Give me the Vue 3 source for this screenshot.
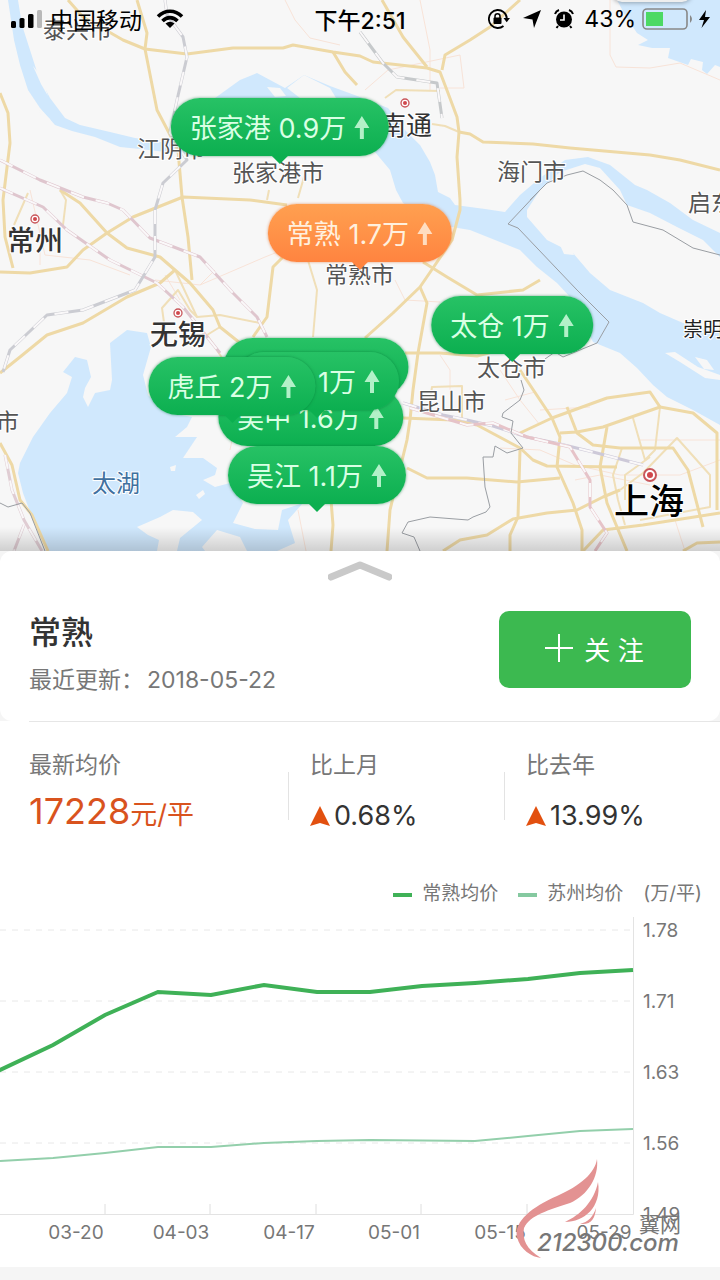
<template>
  <main class="page">
    <section class="map">
      <!-- 地图底图 -->
      <svg class="map-base" viewBox="0 0 720 551" xmlns="http://www.w3.org/2000/svg">
        <rect width="720" height="551" fill="#f7f7f7"/>
        <g class="water">
          <path v-for="(d, index) in waters" :key="index" :d="d"/>
        </g>
        <g class="land">
          <path v-for="(d, index) in islands" :key="index" :d="d"/>
        </g>
        <path class="road-minor" v-for="(d, index) in minorRoads" :key="'m' + index" :d="d"/>
        <path class="road-side" v-for="(d, index) in sideRoads" :key="'s' + index" :d="d"/>
        <path class="road" v-for="(d, index) in roads" :key="'r' + index" :d="d"/>
        <g v-for="(rail, index) in rails" :key="'t' + index">
          <path class="rail" :d="rail.d" :stroke="rail.color"/>
          <path class="rail-gap" :d="rail.d"/>
        </g>
        <path class="border" v-for="(d, index) in borders" :key="'b' + index" :d="d"/>
        <g v-for="city in cities" :key="city.x">
          <circle :cx="city.x" :cy="city.y" :r="city.r" fill="#fff" stroke="#c9575c" :stroke-width="city.r / 3"/>
          <circle :cx="city.x" :cy="city.y" :r="city.r / 2" fill="#d0474c"/>
        </g>
        <text
          v-for="place in places"
          :key="place.name + place.x"
          class="place"
          :class="place.kind"
          :x="place.x"
          :y="place.y"
        >{{ place.name }}</text>
        <rect class="top-card" x="612" y="-30" width="80" height="32" rx="10"/>
      </svg>

      <!-- 均价标注 -->
      <button
        v-for="pin in pins"
        :key="pin.x + '-' + pin.y"
        class="pin"
        :class="{ active: pin.active }"
        :style="{ left: pin.x / 7.2 + '%', top: pin.y / 5.51 + '%', minWidth: pin.width + 'px' }"
      >
        <span>{{ pin.name }} {{ pin.price }}</span>
        <svg width="16" height="24" viewBox="0 0 16 24">
          <path d="M8 1L15.5 13H10V24H6V13H.5Z" fill="currentColor"/>
        </svg>
      </button>

      <!-- 状态栏 -->
      <header class="status-bar">
        <div class="status-left">
          <svg width="32" height="20" viewBox="0 0 32 20">
            <rect x="1" y="12" width="5" height="7" rx="1.5"/>
            <rect x="9.5" y="9" width="5" height="10" rx="1.5"/>
            <rect x="18" y="5" width="5.500" height="14" rx="1.5"/>
            <rect x="27" y="1" width="5" height="18" rx="1.5" fill="#b9b9b9"/>
          </svg>
          <span>中国移动</span>
          <svg class="wifi" width="28" height="20" viewBox="0 0 28 20" fill="none" stroke="#000" stroke-width="3.6">
            <path d="M2 7.5C9 .5 19 .5 26 7.5"/>
            <path d="M6.5 12C11 7.5 17 7.5 21.5 12"/>
            <path d="M14 19L9.5 14.5Q14 11 18.5 14.5Z" fill="#000" stroke="none"/>
          </svg>
        </div>
        <strong>下午2:51</strong>
        <div class="status-right">
          <svg width="22" height="20" viewBox="0 0 22 20">
            <path d="M15.5 3A9 9 0 1 0 15.500 17M15.500 3Q18.800 5.500 18.800 9.500" fill="none" stroke="#000" stroke-width="1.8"/>
            <path d="M15.5 9H22L18.7 13.2Z"/>
            <rect x="5.5" y="8.5" width="8" height="6.500" rx="1"/>
            <path d="M7 9V7.2A2.5 2.5 0 0 1 12 7.2V9" fill="none" stroke="#000" stroke-width="1.5"/>
          </svg>
          <svg width="20" height="20" viewBox="0 0 20 20">
            <path d="M19 1L12 19L10.5 10.5L1 9Z"/>
          </svg>
          <svg width="20" height="20" viewBox="0 0 20 20">
            <circle cx="10" cy="10.5" r="8"/>
            <path d="M1 5Q2 2 5 1M19 5Q18 2 15 1M4 17L2.5 19M16 17L17.5 19" fill="none" stroke="#000" stroke-width="2"/>
            <path d="M10 5.5V11H6" fill="none" stroke="#fff" stroke-width="1.6"/>
          </svg>
          <span>43%</span>
          <svg width="68" height="22" viewBox="0 0 68 22">
            <rect x="1" y="1" width="44" height="20" rx="4" fill="none" stroke="#888" stroke-width="1.6"/>
            <rect x="4" y="4" width="17" height="14" fill="#4cd964"/>
            <path d="M48 7Q52 11 48 15Z" fill="#888"/>
            <path d="M64 2L57 12H62L59.5 20L68 9H63Z"/>
          </svg>
        </div>
      </header>
    </section>

    <!-- 城市信息 -->
    <section class="city">
      <button class="handle" aria-label="展开">
        <svg width="64" height="20" viewBox="0 0 64 20">
          <path d="M3 16L32 4L61 16" fill="none" stroke="#c9c9c9" stroke-width="7" stroke-linecap="round" stroke-linejoin="round"/>
        </svg>
      </button>
      <div class="city-row">
        <div>
          <h1>常熟</h1>
          <p><span>最近更新：</span><span>2018-05-22</span></p>
        </div>
        <button class="follow">
          <svg width="30" height="30" viewBox="0 0 30 30">
            <path d="M15 1V29M1 15H29" stroke="#fff" stroke-width="2"/>
          </svg>
          <span>关 注</span>
        </button>
      </div>
    </section>

    <!-- 价格数据 -->
    <section class="stats">
      <div class="stat">
        <h2>最新均价</h2>
        <p class="price">17228<small>元/平</small></p>
      </div>
      <div class="stat" v-for="item in changes" :key="item.label">
        <h2>{{ item.label }}</h2>
        <p>
          <svg width="20" height="20" viewBox="0 0 20 20">
            <path d="M10 0L20 20L10 17L0 20Z" fill="#e2500f"/>
          </svg>
          {{ item.value }}
        </p>
      </div>
    </section>

    <!-- 走势图 -->
    <section class="trend">
      <div class="legend">
        <span class="legend-item">常熟均价</span>
        <span class="legend-item light">苏州均价</span>
        <span class="unit">(万/平)</span>
      </div>
      <svg class="chart" viewBox="0 914 720 354" xmlns="http://www.w3.org/2000/svg">
        <path
          v-for="row in rows.slice(0, 4)"
          :key="row.y"
          :d="`M0 ${row.y}H633`"
          stroke="#e8e8e8"
          stroke-width="1"
          stroke-dasharray="6 6"
        />
        <path d="M0 1215.5H633.5V918" fill="none" stroke="#e3e3e3"/>
        <path v-for="x in ticks" :key="x" :d="`M${x} 1205V1215`" stroke="#dedede"/>
        <polyline :points="suzhou" fill="none" stroke="#93cfab" stroke-width="2"/>
        <polyline :points="changshu" fill="none" stroke="#3fb157" stroke-width="4"/>
        <text v-for="row in rows" :key="row.label" x="643" :y="row.y + 7">{{ row.label }}</text>
        <text v-for="day in days" :key="day.label" :x="day.x" y="1240" text-anchor="middle">{{ day.label }}</text>
        <!-- 水印 -->
        <g class="wing" fill="#e39292">
          <path d="M597 1160C595 1174 580 1187 557 1197C532 1208 514 1222 517 1238C520 1251 532 1258 541 1259C526 1250 522 1240 524 1229C530 1216 549 1211 570 1204C588 1196 599 1178 597 1160Z"/>
          <path d="M598 1183C594 1203 580 1216 565 1223C584 1223 602 1208 598 1183Z"/>
          <path d="M596 1209C593 1218 588 1223 580 1225C592 1226 595 1219 596 1209Z"/>
        </g>
        <text class="mark-name" x="639" y="1233">翼网</text>
        <text class="mark-site" x="537" y="1252">212300.com</text>
      </svg>
    </section>
  </main>
</template>

<script setup>
import { ref } from 'vue'

// 标注，x / y 为箭头尖端位置
const pins = ref([
  { name: '张家港', price: '0.9万', x: 280, y: 164 },
  { name: '常熟', price: '1.7万', x: 360, y: 270, active: true },
  { name: '太仓', price: '1万', x: 512, y: 362 },
  { name: '', price: '', x: 316, y: 404, width: 185 },
  { name: '吴中', price: '1.6万', x: 311, y: 454 },
  { name: '', price: '1万', x: 317, y: 418, width: 164 },
  { name: '虎丘', price: '2万', x: 232, y: 423 },
  { name: '吴江', price: '1.1万', x: 317, y: 512 }
])

const places = [
  { name: '泰兴市', x: 43, y: 38 },
  { name: '江阴市', x: 137, y: 157 },
  { name: '张家港市', x: 232, y: 181 },
  { name: '南通', x: 380, y: 135, kind: 'town' },
  { name: '海门市', x: 497, y: 180 },
  { name: '启东市', x: 688, y: 211 },
  { name: '常州', x: 7, y: 251, kind: 'big' },
  { name: '常熟市', x: 325, y: 283 },
  { name: '无锡', x: 150, y: 345, kind: 'big' },
  { name: '太仓市', x: 477, y: 376 },
  { name: '崇明', x: 683, y: 337, kind: 'dark' },
  { name: '昆山市', x: 417, y: 410 },
  { name: '市', x: -4, y: 430 },
  { name: '太湖', x: 92, y: 492, kind: 'lake' },
  { name: '上海', x: 614, y: 514, kind: 'metro' }
]

const cities = [
  { x: 405, y: 103, r: 4 },
  { x: 35, y: 219, r: 4 },
  { x: 178, y: 313, r: 4 },
  { x: 650, y: 475, r: 6 }
]

// 长江、太湖和近海
const waters = [
  'M8 0L14 40L20 65L28 90L40 108L55 125L72 131L95 137L120 147L140 149L200 156L375 152L390 170L396 190L403 203L440 225L470 230L500 242L520 250L537 267L557 283L570 297L593 342L620 353L637 368L653 385L667 397L693 410L720 425V333L683 323L660 313L643 303L610 290L590 273L573 253L547 240L527 217L527 210L540 190L560 172L585 164L600 168L620 190L627 205L650 213L677 227L703 240L720 257V233L693 220L670 203L647 190L635 185L610 165L588 157L565 160L540 178L520 195L505 212L485 209L455 205L450 198L438 192L435 175L430 162L420 145L405 130L388 108L360 97L330 86L304 75L285 88L257 73L240 80L215 98L180 140L160 142L135 138L110 132L80 125L65 118L50 98L38 75L30 50L22 25L18 0Z',
  'M617 0L625 15L637 33L648 40L638 45L652 48L670 48L668 58L688 65L691 59L703 62L702 70L707 74L715 65L720 67V0Z',
  'M75 357L87 360L91 377L85 388L83 397L88 407L95 393L110 390L112 380L110 343L127 330L147 333L151 347L143 375L148 395L165 412L192 417L187 427L175 437L197 437L183 458L203 458L217 468L215 475L203 480L215 487L230 483L243 503L233 523L255 529L278 530L282 510L303 503L288 520L295 543L277 551H247L240 537L217 530L202 547L205 551H177L180 538L202 520L193 512L173 510L160 517L137 527L148 535L159 540L157 551H48L43 540L32 517L23 493L18 473L20 463L33 437L50 413L67 393L72 377L63 372Z'
]

const islands = [
  'M287 88L304 75L330 88L336 98H300Z',
  'M267 87L280 88L286 96L275 97Z',
  'M665 353L675 352L698 367L720 375V380L705 378L680 362Z',
  'M695 357L707 360L714 370L704 369Z',
  'M560 245L570 244L574 255L564 254Z',
  'M170 467L176 465L175 471L171 471Z',
  'M196 495L203 490L205 494L199 499Z',
  'M33 66L42 77L48 96L41 84Z',
  'M38 108L50 119L52 125L41 115Z'
]

// 高速
const roads = [
  'M68 0L83 17L123 40L145 49L187 54L233 48L283 48L293 45L333 52L360 56L373 62L427 68L440 72L448 93L457 117L459 132L457 157L460 200L460 210L452 240L433 268L420 287L393 313L365 338',
  'M137 0L147 33L145 49L157 110L178 150L182 197L188 237L192 280',
  'M459 132L470 134L483 142L533 144L570 148L650 155L680 160L720 170',
  'M442 70L445 55L470 40L490 27L520 0',
  'M382 0L403 37L427 67',
  'M333 52L345 72L357 85',
  'M0 93L8 113L10 143L3 200L5 237L13 268',
  'M0 272L30 273L67 267L83 250L107 233L133 217L183 197L250 200L287 205',
  'M60 190L80 203L107 233L127 248L160 257L190 283L213 310L220 327L240 343',
  'M0 373L20 357L47 335L83 323L127 297L160 283L175 270',
  'M253 337L267 317L273 267L283 257',
  'M423 262L447 277L477 295L523 290L540 280',
  'M420 287L427 303L418 353L413 390L410 420L407 440L390 510L387 551',
  'M405 353H440L477 356L500 350',
  'M520 370L552 418L560 437L557 467L573 503L582 530V551',
  'M403 418L453 420L477 425L520 448L533 460L547 466L617 467',
  'M520 433L552 418L607 398L650 392L660 407',
  'M567 407L577 433L593 445L620 448L673 448L688 470L703 527',
  'M560 433L577 432L603 427L660 407L693 413L717 433V510',
  'M607 427L600 467L607 503L627 551',
  'M407 468L427 478L467 478L517 482L560 478',
  'M520 450L518 517L510 535V551',
  'M443 551L460 540L487 535L513 519L547 513L577 510L603 497L620 490',
  'M583 551L603 530L643 525L720 513',
  'M683 551L697 543L720 542',
  'M0 443L12 465L20 500L32 515L48 551',
  'M331 500L333 525L331 551'
]

const sideRoads = [
  'M385 98L396 90L440 91M432 124L445 126L459 132',
  'M63 225L66 200L60 190M28 193L14 225',
  'M175 270L197 317L220 315L260 323',
  'M307 257L317 290L313 337',
  'M220 327L207 335L230 370M165 330L162 308L178 290L190 310L197 317',
  'M620 490L643 473L677 438L710 475V507L640 520',
  'M633 418L645 460L655 450L660 407',
  'M622 448L613 475L618 500L625 525M625 500V475L650 457',
  'M267 200L269 190M298 198L306 170',
  'M430 400L432 387L462 386V418'
]

const minorRoads = [
  'M420 0L430 50V90M365 90L388 70L460 55L464 88H440',
  'M610 0V55L616 67L650 68L680 63L720 80',
  'M285 0L295 20L310 38L340 45',
  'M30 190L45 255L90 260L130 275',
  'M155 280L200 285L265 257L280 251M200 285L215 270',
  'M40 265V230M165 275L180 300',
  'M395 280L405 300L440 302',
  'M440 355L450 370V395M500 370L520 400L540 425M505 400L535 392',
  'M500 448L540 450L575 465L620 475H680L720 460',
  'M640 440H720M540 410L590 407',
  'M298 510L306 551M232 440L230 450',
  'M675 520L685 551M575 480L600 475L650 485'
]

const rails = [
  { color: '#dfc6ce', d: 'M0 160L40 180L83 197L107 203L123 210L150 238L200 257L233 293L257 317L267 337' },
  { color: '#dfc6ce', d: 'M0 188L43 207L67 230L110 260L157 283L183 307L220 353' },
  { color: '#cbccd2', d: 'M165 0L167 15L183 37L187 57L177 100L170 133L187 160L163 183L155 210L155 257L135 290L83 310L47 315L10 350L3 372' },
  { color: '#c6c9cb', d: 'M360 32L383 63L397 77L437 83L442 118' },
  { color: '#cdc9d8', d: 'M403 403L443 415L467 420L493 426L527 437L560 444L593 452L643 465' },
  { color: '#e6c3c8', d: 'M410 408L467 425L493 423L527 437L570 447L590 480V507L607 533L595 551' },
  { color: '#e0cdd3', d: 'M5 455L12 490L24 520L42 551M24 525L14 551' }
]

const borders = [
  'M530 200L547 183L567 175L583 171L600 180L613 190L627 205L633 222L663 230L693 248L720 255',
  'M540 190L508 224L518 228L577 290L609 322L597 343L580 350L563 357L555 352L545 359',
  'M521 380L524 390L520 400L503 413L502 417L513 421L511 433L519 443L523 448L507 453L495 446L493 457L483 457L485 487L490 507L486 512L473 517L468 520L430 517L408 522L402 533L414 537L420 551',
  'M0 503L8 507L22 503L30 513L45 551'
]

const changes = ref([
  { label: '比上月', value: '0.68%' },
  { label: '比去年', value: '13.99%' }
])

// 走势数据
const rows = [
  { y: 931, label: '1.78' },
  { y: 1002, label: '1.71' },
  { y: 1073, label: '1.63' },
  { y: 1144, label: '1.56' },
  { y: 1215, label: '1.49' }
]
const ticks = [105, 210, 316, 421, 527]
const days = [
  { x: 76, label: '03-20' },
  { x: 181, label: '04-03' },
  { x: 289, label: '04-17' },
  { x: 394, label: '05-01' },
  { x: 500, label: '05-15' },
  { x: 604, label: '05-29' }
]
const changshu = '-2,1072 53,1046 105,1016 158,993 211,996 264,986 317,993 370,993 422,987 475,984 528,980 580,974 633,971'
const suzhou = '0,1162 53,1159 105,1154 158,1148 211,1148 264,1144 317,1142 370,1141 475,1142 528,1137 580,1132 633,1130'
</script>

<style>
body {
  background: #f5f5f5;
}
</style>

<style scoped>
.page {
  font-family: Inter, "Noto Sans CJK SC", sans-serif;
  color: #333;
}

h1,
h2,
p {
  margin: 0;
  font-weight: 400;
}

button {
  border: none;
  padding: 0;
  background: none;
  font-family: inherit;
  cursor: pointer;
}

svg {
  display: block;
  flex: none;
}

/* 地图 */
.map {
  position: relative;
  overflow: hidden;
}

.map::after {
  content: "";
  position: absolute;
  left: 0;
  right: 0;
  bottom: 0;
  height: 24px;
  background: linear-gradient(rgba(0, 0, 0, 0), rgba(0, 0, 0, 0.16));
}

.map-base {
  width: 100%;
}

.water path {
  fill: #d0e8fd;
}

.land path {
  fill: #f7f7f7;
}

.top-card {
  fill: #eee;
  filter: drop-shadow(0 1px 2px rgba(0, 0, 0, 0.3));
}

.road,
.road-side,
.road-minor,
.rail,
.rail-gap,
.border {
  fill: none;
  stroke-linejoin: round;
}

.road {
  stroke: #eed9a6;
  stroke-width: 3px;
}

.road-side {
  stroke: #f0dfb8;
  stroke-width: 2px;
}

.road-minor {
  stroke: #f8e3d8;
  stroke-width: 1px;
}

.rail {
  stroke-width: 3px;
}

.rail-gap {
  stroke: #faf8f9;
  stroke-width: 2px;
  stroke-dasharray: 14 12;
}

.border {
  stroke: #9a9ea3;
  stroke-width: 1px;
}

.place {
  font-size: 23px;
  fill: #555;
  stroke: #fff;
  stroke-width: 2px;
  paint-order: stroke;
}

.place.town {
  font-size: 26px;
  fill: #333;
}

.place.big {
  font-size: 28px;
  font-weight: 500;
  fill: #333;
}

.place.dark {
  font-size: 20px;
  fill: #222;
}

.place.lake {
  font-size: 24px;
  fill: #41719f;
}

.place.metro {
  font-size: 35px;
  font-weight: 500;
  fill: #000;
}

.pin {
  position: absolute;
  display: flex;
  align-items: center;
  justify-content: flex-end;
  gap: 8px;
  box-sizing: border-box;
  height: 58px;
  margin-top: -66px;
  padding: 0 19px 2px;
  border-radius: 29px;
  background: linear-gradient(#27c265, #0caf50);
  box-shadow: 0 0 3px rgba(0, 110, 50, 0.6);
  color: #d9ffe4;
  font-size: 27px;
  white-space: nowrap;
  transform: translateX(-50%);
}

.pin svg {
  margin-top: 2px;
  opacity: 0.8;
}

.pin::after {
  content: "";
  position: absolute;
  left: 50%;
  bottom: -8px;
  margin-left: -8px;
  border: 8px solid transparent;
  border-top-color: #0caf50;
  border-bottom: none;
}

.pin.active {
  background: linear-gradient(#ffa050, #ff8440);
  box-shadow: 0 0 3px rgba(220, 100, 30, 0.6);
  color: #fff0de;
}

.pin.active::after {
  border-top-color: #ff8440;
}

/* 状态栏 */
.status-bar {
  position: absolute;
  top: 0;
  left: 0;
  right: 0;
  display: grid;
  grid-template-columns: 1fr auto 1fr;
  align-items: center;
  height: 38px;
  padding: 0 10px;
  color: #000;
  font-size: 23px;
}

.status-bar strong {
  font-weight: 500;
}

.status-left,
.status-right {
  display: flex;
  align-items: center;
  gap: 8px;
}

.status-left .wifi {
  margin-left: 6px;
}

.status-right {
  justify-content: flex-end;
  gap: 12px;
}

.status-right span {
  margin: 0 -6px 0 -2px;
}

/* 城市信息 */
.city {
  background: #fff;
  border-radius: 12px;
}

.handle {
  display: block;
  margin: 0 auto;
  padding: 10px 0;
}

.city-row {
  display: flex;
  justify-content: space-between;
  align-items: flex-start;
  padding: 20px 29px 16px;
}

.city h1 {
  font-size: 32px;
  line-height: 44px;
  font-weight: 500;
}

.city p {
  display: flex;
  gap: 3px;
  font-size: 23px;
  line-height: 50px;
  color: #777;
}

.follow {
  display: flex;
  align-items: center;
  justify-content: center;
  gap: 10px;
  width: 192px;
  height: 77px;
  margin-bottom: 17px;
  padding: 0 2px 3px 0;
  border-radius: 10px;
  background: #3cb950;
  color: #fff;
  font-size: 26px;
}

/* 价格数据 */
.stats {
  display: grid;
  grid-template-columns: 40fr 30fr 30fr;
  background: #fff;
  position: relative;
  padding: 22px 0 24px;
}

.stats::before {
  content: "";
  position: absolute;
  top: 0;
  left: 29px;
  right: 0;
  border-top: 1px solid #e6e6e6;
}

.stat {
  position: relative;
  padding-left: 22px;
}

.stat:first-child {
  padding-left: 29px;
}

.stat + .stat::before {
  content: "";
  position: absolute;
  left: 0;
  top: 29px;
  height: 48px;
  border-left: 1px solid #e3e3e3;
}

.stat h2 {
  font-size: 23px;
  line-height: 44px;
  color: #777;
}

.stat p {
  display: flex;
  align-items: center;
  gap: 4px;
  font-size: 27px;
  line-height: 58px;
}

.stat .price {
  align-items: baseline;
  gap: 0;
  font-size: 36px;
  line-height: 48px;
  color: #d9531e;
}

.price small {
  font-size: 27px;
}

/* 走势图 */
.trend {
  background: #fff;
}

.legend {
  display: flex;
  justify-content: flex-end;
  align-items: center;
  gap: 20px;
  padding: 8px 18px 2px 0;
  font-size: 19px;
  line-height: 34px;
  color: #777;
}

.legend-item::before {
  content: "";
  display: inline-block;
  width: 19px;
  height: 4px;
  margin-right: 10px;
  background: #3fb157;
  vertical-align: middle;
}

.legend-item.light::before {
  background: #85c9a0;
}

.chart {
  width: 100%;
}

.chart text {
  font-size: 19px;
  fill: #777;
}

.chart .mark-name {
  font-size: 21px;
}

.chart .mark-site {
  font-size: 24px;
  font-style: italic;
  font-weight: 500;
}
</style>
